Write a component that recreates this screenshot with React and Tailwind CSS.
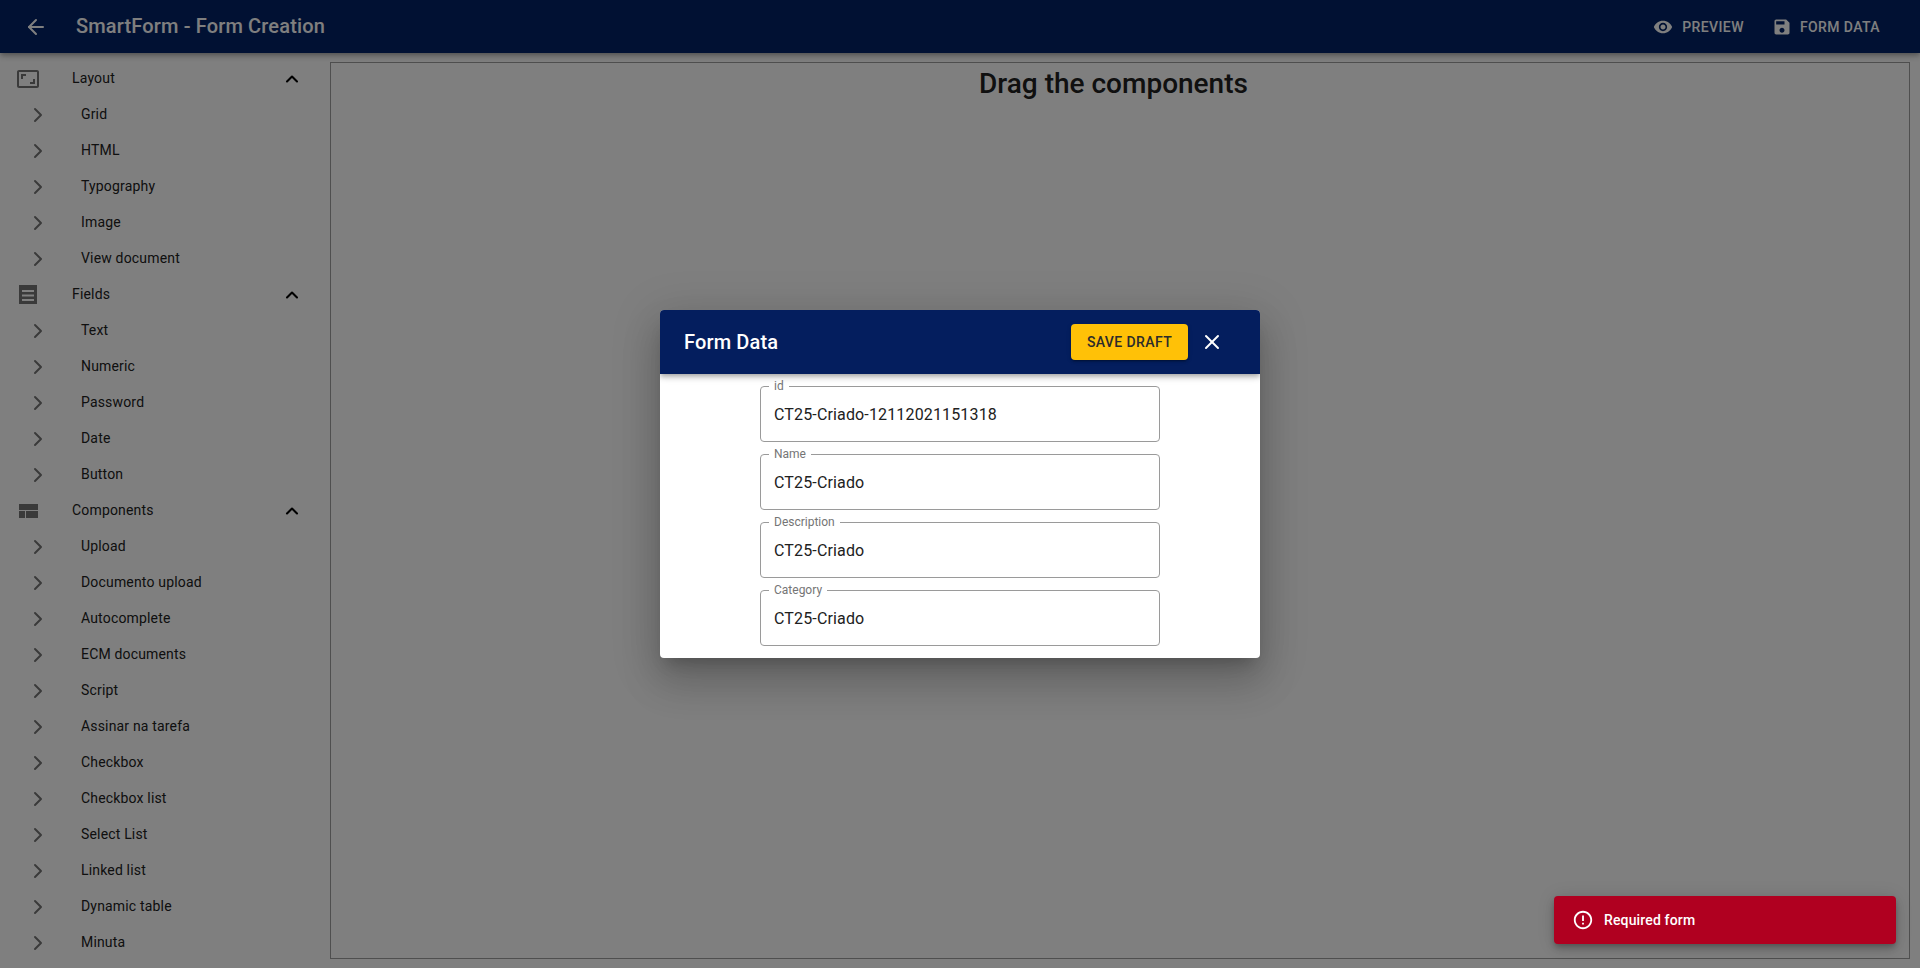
import { ArrowLeft, ChevronRight, ChevronUp, X } from "lucide-react";

const sections = [
  { title: "Layout", icon: "ratio", items: ["Grid", "HTML", "Typography", "Image", "View document"] },
  { title: "Fields", icon: "lines", items: ["Text", "Numeric", "Password", "Date", "Button"] },
  {
    title: "Components",
    icon: "quilt",
    items: [
      "Upload",
      "Documento upload",
      "Autocomplete",
      "ECM documents",
      "Script",
      "Assinar na tarefa",
      "Checkbox",
      "Checkbox list",
      "Select List",
      "Linked list",
      "Dynamic table",
      "Minuta",
    ],
  },
];

const fields = [
  { label: "id", value: "CT25-Criado-12112021151318" },
  { label: "Name", value: "CT25-Criado" },
  { label: "Description", value: "CT25-Criado" },
  { label: "Category", value: "CT25-Criado" },
];

const icons = {
  ratio:
    "M19 12h-2v3h-3v2h5v-5zM7 9h3V7H5v5h2V9zm14-6H3c-1.1 0-2 .9-2 2v14c0 1.1.9 2 2 2h18c1.1 0 2-.9 2-2V5c0-1.1-.9-2-2-2zm0 16.01H3V4.99h18v14.02z",
  lines: "M3 2h18v19H3V2zm3 5v2h12V7H6zm0 4.5v2h12v-2H6zm0 4.5v2h12v-2H6z",
  quilt: "M3 5h19v6H3V5zm0 7h6v7H3v-7zm7 0h12v7H10v-7z",
};

const MaterialIcon = ({ d, className }) => (
  <svg viewBox="0 0 24 24" fill="currentColor" className={className}>
    <path d={d} />
  </svg>
);

const Section = ({ title, icon, items }) => (
  <div>
    <div className="flex h-9 items-center pl-4 pr-[28px] text-sm tracking-[0.17px] text-[#212121]">
      <MaterialIcon d={icons[icon]} className="mt-0.5 h-6 w-6 shrink-0 text-[#757575]" />
      <span className="ml-[32px] flex-1">{title}</span>
      <ChevronUp className="mt-0.5 h-5 w-5 text-black" strokeWidth={2.5} />
    </div>
    {items.map((item) => (
      <div key={item} className="flex h-9 items-center pl-[26px] text-sm tracking-[0.17px] text-[#212121]">
        <ChevronRight className="mt-px h-6 w-6 shrink-0 text-[#757575]" strokeWidth={2} />
        <span className="ml-[31px]">{item}</span>
      </div>
    ))}
  </div>
);

const Field = ({ label, value }) => (
  <div className="relative flex h-14 w-[400px] items-center rounded border border-[#9a9a9a] px-[13px] pt-[2px] text-base tracking-[0.15px] text-[#212121]">
    <span className="absolute -top-2 left-2 bg-white px-[5px] text-xs leading-[14px] tracking-normal text-[#757575]">
      {label}
    </span>
    {value}
  </div>
);

export default function App() {
  return (
    <div className="relative h-[968px] w-full overflow-hidden bg-white font-['Roboto',sans-serif]">
      <header className="relative z-10 flex h-[53px] items-center bg-[#022266] pl-6 pr-10 text-white shadow-[0_2px_4px_-1px_rgba(0,0,0,0.2),0_4px_5px_0_rgba(0,0,0,0.14),0_1px_10px_0_rgba(0,0,0,0.12)]">
        <ArrowLeft className="h-6 w-6" strokeWidth={2} />
        <h1 className="ml-[28px] flex-1 pb-[2px] text-xl font-medium tracking-[0.15px]">SmartForm - Form Creation</h1>
        <div className="flex items-center gap-[28px] text-sm font-medium tracking-[0.4px]">
          <div className="flex items-center gap-[9px]">
            <MaterialIcon
              d="M12 4.5C7 4.5 2.73 7.61 1 12c1.73 4.39 6 7.5 11 7.5s9.27-3.11 11-7.5c-1.73-4.39-6-7.5-11-7.5zM12 17c-2.76 0-5-2.24-5-5s2.24-5 5-5 5 2.24 5 5-2.24 5-5 5zm0-8c-1.66 0-3 1.34-3 3s1.34 3 3 3 3-1.34 3-3-1.34-3-3-3z"
              className="h-5 w-5"
            />
            PREVIEW
          </div>
          <div className="flex items-center gap-2">
            <MaterialIcon
              d="M17 3H5c-1.11 0-2 .9-2 2v14c0 1.1.89 2 2 2h14c1.1 0 2-.9 2-2V7l-4-4zm-5 16c-1.66 0-3-1.34-3-3s1.34-3 3-3 3 1.34 3 3-1.34 3-3 3zm3-10H5V5h10v4z"
              className="h-5 w-5"
            />
            FORM DATA
          </div>
        </div>
      </header>

      <div className="flex">
        <aside className="w-[330px] shrink-0 pt-[7px]">
          {sections.map((section) => (
            <Section key={section.title} {...section} />
          ))}
        </aside>
        <main className="mr-[10px] mt-[9px] h-[897px] flex-1 border border-[#9e9e9e]">
          <h2 className="pr-[13px] pt-[3px] text-center text-[28px] font-medium leading-9 text-[#212121]">
            Drag the components
          </h2>
        </main>
      </div>

      {/* backdrop */}
      <div className="absolute inset-0 z-20 bg-black/50" />

      <div className="absolute left-[660px] top-[310px] z-30 w-[600px] overflow-hidden rounded bg-white shadow-[0_11px_15px_-7px_rgba(0,0,0,0.2),0_24px_38px_3px_rgba(0,0,0,0.14),0_9px_46px_8px_rgba(0,0,0,0.12)]">
        <div className="relative z-10 flex h-16 items-center bg-[#041e5e] pl-6 pr-[36px] text-white shadow-[0_2px_4px_-1px_rgba(0,0,0,0.2),0_4px_5px_0_rgba(0,0,0,0.14),0_1px_10px_0_rgba(0,0,0,0.12)]">
          <span className="flex-1 text-xl font-medium tracking-[0.15px]">Form Data</span>
          <button className="flex h-9 w-[117px] items-center justify-center rounded bg-[#ffc107] text-sm font-medium tracking-[0.4px] text-[#2b2b2b] shadow-[0_3px_1px_-2px_rgba(0,0,0,0.2),0_2px_2px_0_rgba(0,0,0,0.14),0_1px_5px_0_rgba(0,0,0,0.12)]">
            SAVE DRAFT
          </button>
          <X className="ml-3 h-6 w-6" strokeWidth={2} />
        </div>
        <div className="flex flex-col items-center gap-3 py-3">
          {fields.map((field) => (
            <Field key={field.label} {...field} />
          ))}
        </div>
      </div>

      <div className="absolute left-[1554px] top-[896px] z-30 flex h-12 w-[342px] items-center rounded bg-[#b00020] pl-[18px] text-sm font-medium tracking-[0.15px] text-white shadow-[0_3px_5px_-1px_rgba(0,0,0,0.2),0_6px_10px_0_rgba(0,0,0,0.14),0_1px_18px_0_rgba(0,0,0,0.12)]">
        <MaterialIcon
          d="M11 15h2v2h-2zm0-8h2v6h-2zm.99-5C6.47 2 2 6.48 2 12s4.47 10 9.99 10C17.52 22 22 17.52 22 12S17.52 2 11.99 2zM12 20c-4.42 0-8-3.58-8-8s3.58-8 8-8 8 3.58 8 8-3.58 8-8 8z"
          className="h-[22px] w-[22px] shrink-0"
        />
        <span className="ml-[10px]">Required form</span>
      </div>
    </div>
  );
}
